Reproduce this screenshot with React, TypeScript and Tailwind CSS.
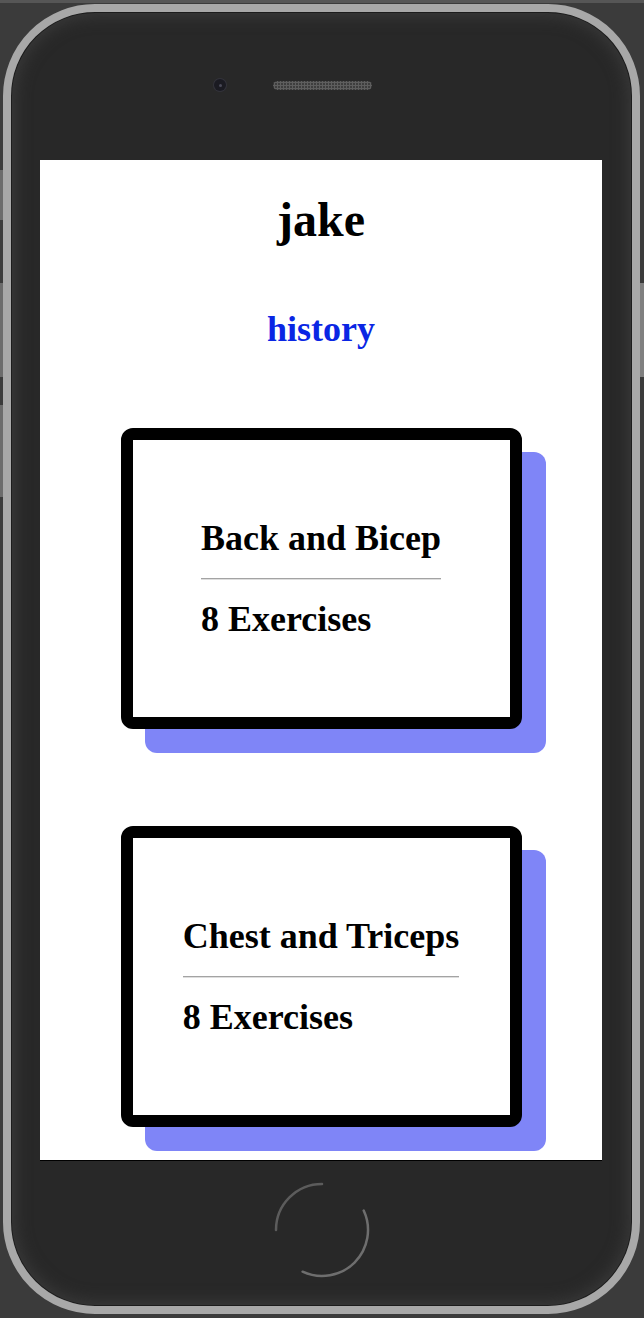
type Workout = {
  id: number;
  name: string;
  exercises: number;
};

const workouts: Workout[] = [
  { id: 1, name: 'Back and Bicep', exercises: 8 },
  { id: 2, name: 'Chest and Triceps', exercises: 8 },
];

function WorkoutCard({ workout }: { workout: Workout }) {
  return (
    <div className="flex h-[301px] w-[401px] shrink-0 items-center justify-center rounded-[12px] border-[12px] border-black bg-white shadow-[24px_24px_0_0_#7f85f7]">
      <div className="flex flex-col">
        <h2 className="text-[36px] leading-[41px] font-bold">{workout.name}</h2>
        <div className="mt-[19px] h-[2px] border-t border-b border-t-[#a3a3a3] border-b-[#dedede]" />
        <h2 className="mt-[19px] text-[36px] leading-[41px] font-bold">{workout.exercises} Exercises</h2>
      </div>
    </div>
  );
}

function HomeButton() {
  return (
    <svg width="100" height="100" viewBox="0 0 100 100" fill="none" className="mt-[20px] self-center">
      <path d="M50 4 A46 46 0 0 0 4 50" stroke="#5c5c5c" strokeWidth="2.5" strokeLinecap="round" />
      <path d="M30.56 91.69 A46 46 0 0 0 91.69 30.56" stroke="#6e6e6e" strokeWidth="2.5" strokeLinecap="round" />
    </svg>
  );
}

export default function App() {
  return (
    <div className="flex h-[1318px] w-[644px] flex-col overflow-hidden bg-[#3b3b3b] font-['Liberation_Serif',serif] text-black">
      <div className="h-[3px] shrink-0 bg-[#565656]" />
      <div className="flex">
        {/* left side buttons */}
        <div className="flex w-[3px] shrink-0 flex-col">
          <div className="mt-[167px] h-[50px] bg-[#6c6c6c]" />
          <div className="mt-[63px] h-[94px] bg-[#6c6c6c]" />
          <div className="mt-[28px] h-[92px] bg-[#6c6c6c]" />
        </div>

        {/* phone body */}
        <div className="mt-[1px] flex h-[1310px] w-[637px] shrink-0 flex-col rounded-[92px] border-[8px] border-[#a8a8a8] bg-[#282828] shadow-[inset_0_0_0_1px_#1c1c1c,inset_0_0_16px_4px_#3a3a3a]">
          <div className="mt-[67px] flex items-center pl-[203px]">
            <div className="flex h-[12px] w-[12px] items-center justify-center rounded-full bg-[#1b1b22] shadow-[0_0_0_1px_#33333b]">
              <div className="h-[3px] w-[3px] rounded-full bg-[#4a4a58]" />
            </div>
            <div className="ml-[47px] h-[9px] w-[99px] rounded-full bg-[#3e3e3e] bg-[radial-gradient(circle,#5e5e5e_1px,transparent_1.2px)] bg-[length:3px_3px]" />
          </div>

          <div className="mt-[69px] ml-[29px] flex h-[1000px] w-[562px] flex-col items-center overflow-hidden bg-white shadow-[0_1px_0_#000]">
            <h1 className="mt-[32px] text-[48px] leading-[55px] font-bold">jake</h1>
            <p className="mt-[62px] text-[36px] leading-[41px] font-bold text-[#0a26e4]">history</p>

            <div className="mt-[78px] flex flex-col items-center gap-[97px]">
              {workouts.map((w) => (
                <WorkoutCard key={w.id} workout={w} />
              ))}
            </div>
          </div>

          <HomeButton />
        </div>

        {/* right side button */}
        <div className="flex w-[4px] shrink-0 flex-col">
          <div className="mt-[280px] h-[94px] bg-[#808080]" />
        </div>
      </div>
    </div>
  );
}
